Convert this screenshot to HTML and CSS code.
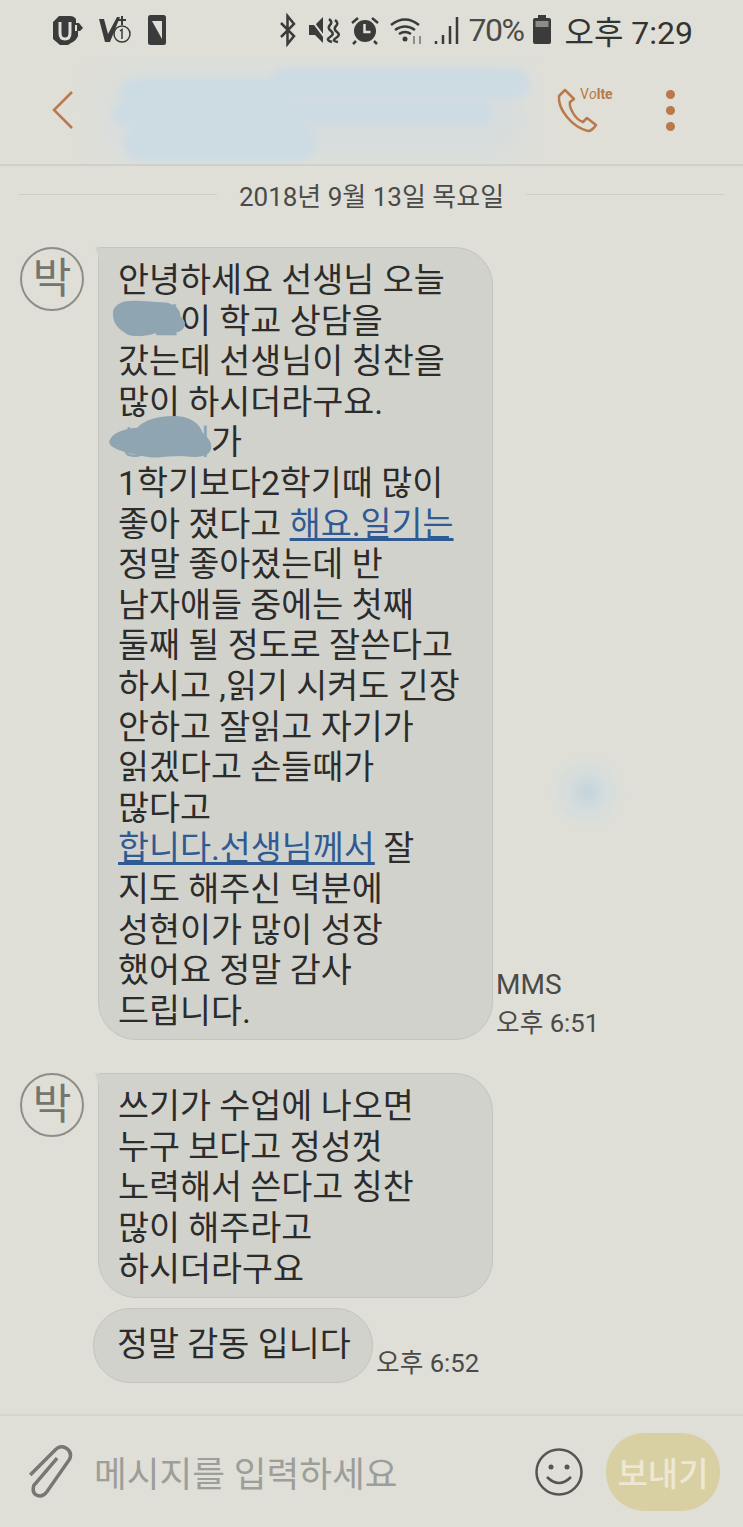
FILE: index.html
```html
<!DOCTYPE html>
<html lang="ko">
<head>
    <meta charset="UTF-8">
    <meta name="viewport" content="width=device-width, initial-scale=1.0">
    <title>메시지</title>
    <link rel="stylesheet" href="styles.css">
</head>
<body>

<div class="phone">
    <div class="status-bar">
        <div class="status-left">
            <svg class="ic" width="34" height="32" viewBox="0 0 34 32">
                <path d="M8 2h11q4 0 6 3v4h3l4 5-3 3h-2v5q-2 5-7 7l-3 2H9l-7-6V8z" fill="#3a3b3a"/>
                <path d="M9 8v11q0 6 5 6t5-6V8" fill="none" stroke="#e0e0da" stroke-width="3"/>
                <path d="M25 11v6" stroke="#e0e0da" stroke-width="2"/>
            </svg>
            <svg class="ic" width="36" height="32" viewBox="0 0 36 32">
                <path d="M1 5h5l4 15L19 3h3L12 28H7z" fill="#3a3b3a"/>
                <path d="M24 2v9M20 6h8" stroke="#3a3b3a" stroke-width="2"/>
                <circle cx="24" cy="20" r="8" fill="#e0e0da" stroke="#3a3b3a" stroke-width="1.5"/>
                <path d="M22 17l2-1.500V25" fill="none" stroke="#3a3b3a" stroke-width="1.500"/>
            </svg>
            <svg class="ic" width="20" height="32" viewBox="0 0 20 32">
                <rect x="1" y="1" width="18" height="30" rx="2.500" fill="#3a3b3a"/>
                <path d="M5 7h10v18z" fill="#e0e0da"/>
            </svg>
        </div>
        <div class="status-right">
            <svg width="20" height="34" viewBox="0 0 20 34">
                <path d="M3 10l13 13-6.500 8V3L16 11 3 24" fill="none" stroke="#3a3b3a" stroke-width="2.500"/>
            </svg>
            <svg width="32" height="32" viewBox="0 0 32 32">
                <path d="M1 11h6l8-8v26l-8-8H1z" fill="#3a3b3a"/>
                <path d="M2 4l18 24" stroke="#e0e0da" stroke-width="2"/>
                <path d="M21 5q4 3 1 6t1 6-1 6 2 5M27 6q4 3 1 6t1 6-1 6 2 4" fill="none" stroke="#3a3b3a" stroke-width="2.500"/>
            </svg>
            <svg width="30" height="32" viewBox="0 0 30 32">
                <circle cx="15" cy="17" r="11" fill="#3a3b3a"/>
                <path d="M14.500 10v8h6" fill="none" stroke="#e0e0da" stroke-width="2.500"/>
                <path d="M2 9l6-5M28 9l-6-5M6 27l-3 3M24 27l3 3" stroke="#3a3b3a" stroke-width="2.500"/>
            </svg>
            <svg width="34" height="32" viewBox="0 0 34 32">
                <path d="M1 11q14-11 28 0M5 16q10-7 20 0M9 20q6-4 12 0" fill="none" stroke="#3a3b3a" stroke-width="2.500"/>
                <circle cx="15" cy="25" r="2.500" fill="#3a3b3a"/>
                <path d="M24 22v8M30 30v-8" stroke="#8c8d8a" stroke-width="2"/>
            </svg>
            <svg width="26" height="32" viewBox="0 0 26 32">
                <path d="M2 30v-3M9 30V21M16 30V12M23 30V3" stroke="#3a3b3a" stroke-width="2.500"/>
            </svg>
            <span class="battery-text">70%</span>
            <svg class="battery" width="20" height="32" viewBox="0 0 20 32">
                <rect x="1" y="4" width="18" height="26" rx="2" fill="#3a3b3a"/>
                <rect x="6" y="1" width="8" height="4" fill="#3a3b3a"/>
                <rect x="3.500" y="7" width="13" height="6" fill="#8c8d8a"/>
            </svg>
            <span class="clock">오후 7:29</span>
        </div>
    </div>

    <div class="app-header">
        <svg class="back" width="24" height="40" viewBox="0 0 24 40">
            <path d="M21 2L3 20l18 18" fill="none" stroke="#b9794a" stroke-width="2.500"/>
        </svg>
        <svg class="contact-name" width="480" height="110" viewBox="0 0 480 110">
            <defs>
                <filter id="soft" x="-20%" y="-50%" width="140%" height="200%"><feGaussianBlur stdDeviation="16"/></filter>
                <filter id="edge" x="-5%" y="-20%" width="110%" height="140%"><feGaussianBlur stdDeviation="3"/></filter>
            </defs>
            <rect x="40" y="18" width="420" height="84" rx="30" fill="#d0dce2" opacity=".6" filter="url(#soft)"/>
            <g fill="#cddbe3" filter="url(#edge)">
                <rect x="55" y="24" width="170" height="30" rx="14"/>
                <rect x="205" y="13" width="260" height="30" rx="14"/>
                <rect x="48" y="46" width="380" height="24" rx="12"/>
                <rect x="60" y="70" width="190" height="36" rx="16"/>
            </g>
        </svg>
        <div class="header-actions">
            <div class="call">
                <svg width="46" height="46" viewBox="0 0 46 46">
                    <path d="M9 3L3 9q-1 10 8 21t21 14q4 0 8-6l-9-7-4 4q-6-2-10-9t-3-11l4-3z" fill="none" stroke="#b9794a" stroke-width="2.500" stroke-linejoin="round"/>
                </svg>
                <span class="volte">V<i>o</i><b>lte</b></span>
            </div>
            <div class="more"><i></i><i></i><i></i></div>
        </div>
    </div>

    <div class="date-row">
        <span class="date-line"></span>
        <span class="date-text">2018년 9월 13일 목요일</span>
        <span class="date-line"></span>
    </div>

    <div class="messages">
        <div class="msg">
            <div class="avatar">박</div>
            <div class="bubble">
                안녕하세요 선생님 오늘<br>
                <span class="hidden-name">성현</span>이 학교 상담을<br>
                갔는데 선생님이 칭찬을<br>
                많이 하시더라구요.<br>
                <span class="hidden-name">성현이</span>가<br>
                1학기보다2학기때 많이<br>
                좋아 졌다고 <a href="#">해요.일기는</a><br>
                정말 좋아졌는데 반<br>
                남자애들 중에는 첫째<br>
                둘째 될 정도로 잘쓴다고<br>
                하시고 ,읽기 시켜도 긴장<br>
                안하고 잘읽고 자기가<br>
                읽겠다고 손들때가<br>
                많다고<br>
                <a href="#">합니다.선생님께서</a> 잘<br>
                지도 해주신 덕분에<br>
                성현이가 많이 성장<br>
                했어요 정말 감사<br>
                드립니다.
                <svg class="blot blot-one" width="84" height="42" viewBox="0 0 80 44" preserveAspectRatio="none">
                    <path d="M4 14Q8 3 26 4t30 2q12 4 12 14 8 8 2 14T44 38Q30 44 16 38 2 30 4 14z" fill="#8fa5b2"/>
                </svg>
                <svg class="blot blot-two" width="110" height="47" viewBox="0 0 110 48" preserveAspectRatio="none">
                    <path d="M3 26Q8 16 30 14 42 2 66 2t30 18q10 8 8 16t-18 8q-20-2-30 0T22 40 3 26z" fill="#8fa5b2"/>
                </svg>
            </div>
            <div class="meta">
                <div class="meta-type">MMS</div>
                <div>오후 6:51</div>
            </div>
        </div>

        <div class="msg msg-second">
            <div class="avatar">박</div>
            <div class="bubble">
                쓰기가 수업에 나오면<br>
                누구 보다고 정성껏<br>
                노력해서 쓴다고 칭찬<br>
                많이 해주라고<br>
                하시더라구요
            </div>
        </div>

        <div class="msg msg-last">
            <div class="bubble bubble-short">정말 감동 입니다</div>
            <div class="meta">오후 6:52</div>
        </div>
    </div>

    <div class="composer">
        <svg class="clip" width="50" height="54" viewBox="0 0 50 54">
            <path d="M3 27L32 5q6-4 11 1t1 11L17 46q-5 5-10 2t-2-10L32 14" fill="none" stroke="#777873" stroke-width="3.500" transform="rotate(-8 25 27)"/>
        </svg>
        <span class="placeholder">메시지를 입력하세요</span>
        <svg class="smile" width="48" height="48" viewBox="0 0 48 48">
            <circle cx="24" cy="24" r="22.500" fill="none" stroke="#555652" stroke-width="2.500"/>
            <circle cx="16" cy="19" r="2.500" fill="#555652"/>
            <circle cx="32" cy="19" r="2.500" fill="#555652"/>
            <path d="M12 29q12 12 24 0" fill="none" stroke="#555652" stroke-width="2.500"/>
        </svg>
        <button class="send">보내기</button>
    </div>

    <div class="touch-glow"></div>
</div>

</body>
</html>
```

FILE: styles.css
```css
* {
    box-sizing: border-box;
}

body {
    margin: 0;
    background-color: #dfdfd8;
    color: #2b2c2b;
    font-family: Roboto, "Noto Sans CJK KR", sans-serif;
}

.phone {
    position: relative;
    display: flex;
    flex-direction: column;
    height: 100vh;
    overflow: hidden;
}

/* status bar */
.status-bar {
    display: flex;
    justify-content: space-between;
    align-items: center;
    height: 56px;
    padding: 4px 50px 0 51px;
    flex-shrink: 0;
}

.status-left,
.status-right {
    display: flex;
    align-items: center;
}

.status-left {
    gap: 13px;
}

.status-right {
    gap: 10px;
}

.battery-text {
    margin-left: -1px;
    font-size: 32px;
    color: #4a4b49;
    letter-spacing: -1.500px;
}

.battery {
    margin-left: -1px;
}

.clock {
    margin-left: 2px;
    font-size: 32px;
    color: #333432;
}

/* header */
.app-header {
    display: flex;
    align-items: center;
    height: 110px;
    padding: 0 50px 0 51px;
    border-bottom: 2px solid #d0d0c9;
    flex-shrink: 0;
}

.back {
    flex-shrink: 0;
}

.contact-name {
    flex-shrink: 0;
    margin-left: -10px;
}

.header-actions {
    display: flex;
    align-items: center;
    margin-left: auto;
    gap: 62px;
}

.call {
    position: relative;
    width: 48px;
    height: 46px;
}

.volte {
    position: absolute;
    top: 0;
    left: 24px;
    font-size: 14px;
    line-height: 15px;
    color: #b9794a;
}

.volte b {
    font-weight: 700;
}

.more {
    display: flex;
    flex-direction: column;
    gap: 7px;
    padding-right: 18px;
}

.more i {
    display: block;
    width: 9px;
    height: 9px;
    border-radius: 50%;
    background-color: #b9794a;
}

/* date */
.date-row {
    display: flex;
    align-items: center;
    gap: 22px;
    height: 58px;
    padding: 0 19px 2px;
    flex-shrink: 0;
}

.date-line {
    flex: 1;
    height: 1px;
    background-color: #cdcdc5;
}

.date-text {
    font-size: 26px;
    color: #4a4b49;
}

/* messages */
.messages {
    flex: 1;
    padding-top: 23px;
}

.msg {
    display: flex;
    align-items: flex-end;
    padding-left: 20px;
}

.msg-second {
    margin-top: 33px;
}

.msg-last {
    margin-top: 10px;
    padding-left: 93px;
}

.avatar {
    align-self: flex-start;
    width: 64px;
    height: 64px;
    margin-right: 14px;
    border: 2px solid #8d8e88;
    border-radius: 50%;
    font-size: 42px;
    line-height: 60px;
    text-align: center;
    color: #74756f;
    flex-shrink: 0;
}

.bubble {
    position: relative;
    width: 395px;
    padding: 13px 10px 7px 19px;
    border: 1px solid #c4c4bd;
    border-radius: 3px 38px 38px 38px;
    background-color: #d2d2cc;
    font-size: 33.700px;
    line-height: 40.600px;
    white-space: nowrap;
}

/* small tail at the top left corner */
.msg .avatar + .bubble::before {
    content: "";
    position: absolute;
    top: -1px;
    left: -4px;
    width: 4px;
    height: 12px;
    background-color: #d2d2cc;
    clip-path: polygon(0 0, 100% 0, 100% 100%);
}

.bubble a {
    color: #2f5a94;
}

.bubble-short {
    width: 280px;
    padding: 16px 0 16px 23px;
    border-radius: 37px;
}

.hidden-name {
    color: #8fa5b2;
}

.blot {
    position: absolute;
}

.blot-one {
    top: 49px;
    left: 10px;
}

.blot-two {
    top: 166px;
    left: 8px;
}

.meta {
    margin-bottom: -2px;
    margin-left: 3px;
    font-size: 25.700px;
    line-height: 38px;
    color: #4a4b49;
}

.meta-type {
    font-size: 28px;
}

.msg-last .meta {
    margin-bottom: 0;
    line-height: 40px;
}

/* bottom bar */
.composer {
    display: flex;
    align-items: center;
    height: 113px;
    padding: 0 23px 0 27px;
    border-top: 2px solid #d5d5ce;
    flex-shrink: 0;
}

.clip {
    flex-shrink: 0;
}

.placeholder {
    margin-left: 17px;
    font-size: 35.600px;
    color: #9d9e98;
}

.smile {
    margin-left: auto;
    flex-shrink: 0;
}

.send {
    width: 114px;
    height: 78px;
    margin-left: 23px;
    padding: 0;
    border: none;
    border-radius: 38px;
    background-color: #d8cfa3;
    color: #ece8d4;
    font-family: inherit;
    font-size: 33px;
    font-weight: 500;
}

/* stray touch mark */
.touch-glow {
    position: absolute;
    top: 752px;
    left: 547px;
    width: 80px;
    height: 80px;
    border-radius: 50%;
    background: radial-gradient(circle, #c3d4dc 0, #d6dddc 35%, rgba(223, 223, 216, 0) 70%);
}
```
